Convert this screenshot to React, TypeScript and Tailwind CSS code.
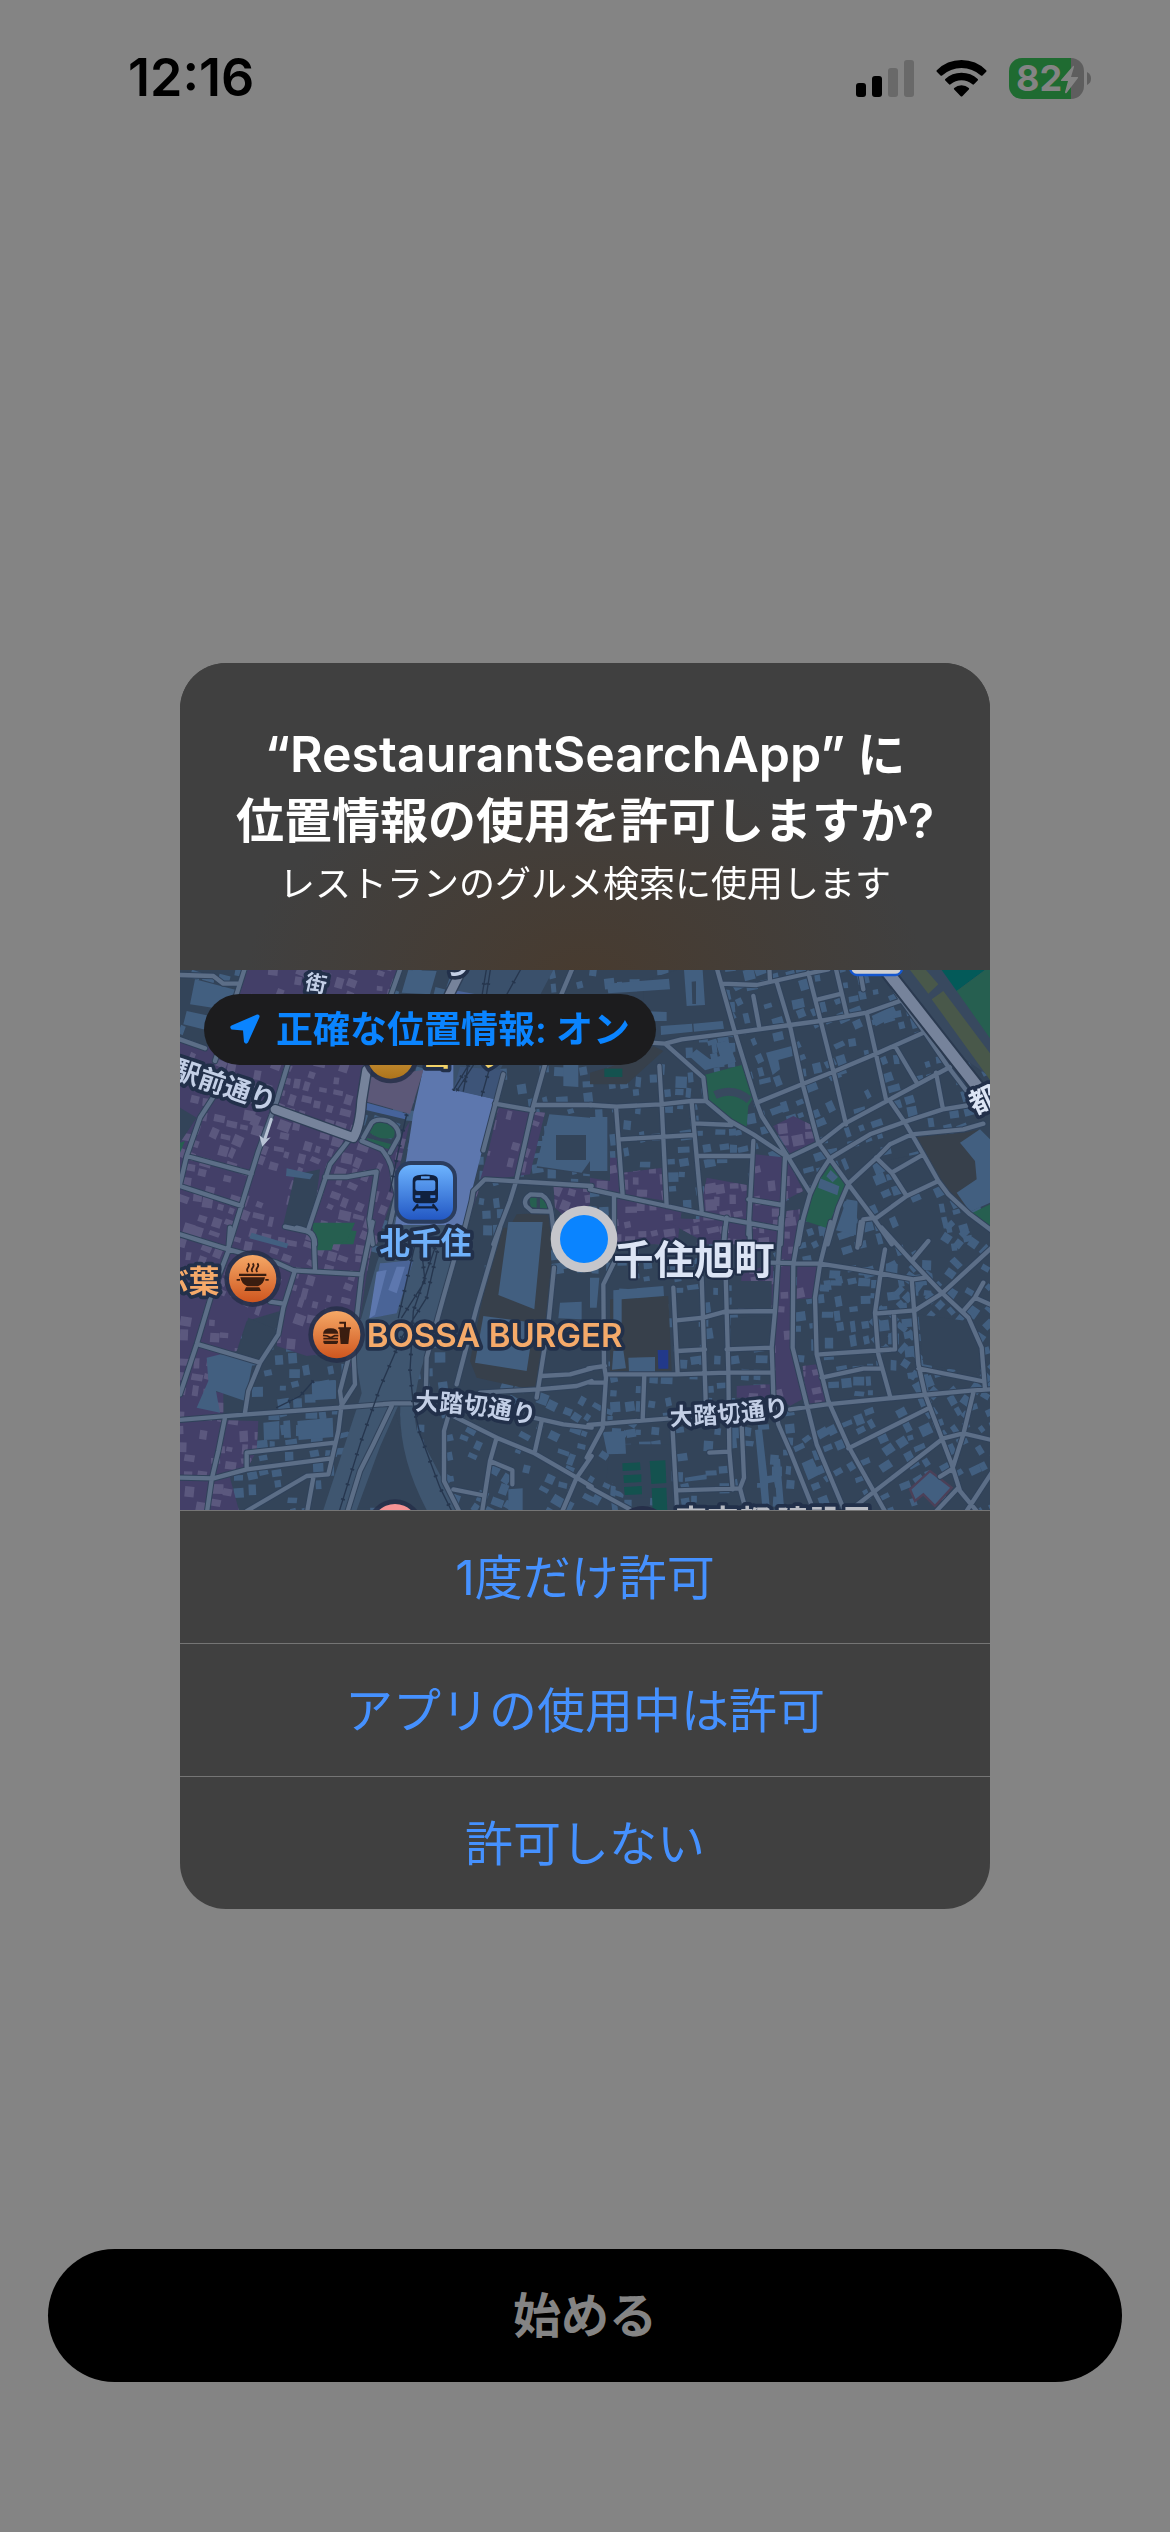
import React from "react";

const BUILDING = "#425f80";
const LAND = "#334459";
const MALL = "#433f68";
const MALL_BUILDING = "#5b587e";
const ROAD = "#5c6e87";

type Zone = { x: number; y: number; w: number; h: number; angle: number };

/* The map is drawn on a 2430 x 1620 canvas, split into four quadrants. */
const QUADRANTS: Record<string, string> = {
  nw: "translate(0 -27)",
  ne: "translate(1230 -27)",
  sw: "translate(0 783)",
  se: "translate(1230 783)",
};

const MALL_AREAS: Record<string, string> = {
  nw: "M0 235L110 262L190 20H655L620 150L560 350L540 520L640 560L690 480L640 700L590 850H0ZM955 440L1095 455L1050 640L905 660L860 800L925 570ZM1120 665L1230 680V730L1180 790L1125 740Z",
  ne: "M100 635L220 620L230 720L100 700ZM350 650L470 672V790L330 745ZM80 712L275 750L262 850H80ZM330 755L570 800V850H320ZM495 580L590 590L640 690L590 715L570 810L475 780ZM550 495L610 465L660 490L678 540L600 580ZM590 750L630 745L620 850H575ZM0 650L60 660V590H85L98 700L0 685Z",
  sw: "M0 -27H590L560 130L530 330L515 420L500 360L380 375L290 345L300 240L200 270L170 360L120 370L80 480L130 485V550L0 565V340ZM0 565L235 570L230 660L200 715L150 740L180 850H0Z",
  se: "M455 130L550 95V232H447ZM570 -27H640L610 100L615 350L645 500L600 525L555 490V240ZM622 100H690L675 200L620 205ZM638 405L680 400L710 515L650 520ZM440 465L540 460L545 502L440 500ZM210 -40L560 -27V30L320 20Z",
};

const QUIET_AREAS: Record<string, string> = {
  nw: "M345 640L420 625L395 815L310 790ZM0 440L50 470L0 545ZM1110 480L1230 470V640L1070 620ZM1010 670L1110 680L1120 840H950Z",
  ne: "M340 -0L385 27L435 215L225 245L160 240V60ZM880 600L980 580L1045 655L950 700Z",
  sw: "M205 260L300 300L240 380L170 370ZM560 600L640 530L740 830H520Z",
  se: "M60 640H245V800H110L50 740ZM425 150H545V232H425ZM422 260L545 255V345H420ZM985 250L1130 270L1170 350V430L1000 400Z",
};

const DARK_AREAS: Record<string, string> = {
  nw: "M1010 760L1110 755L1120 850H960Z",
  ne: "M970 527L1120 515L1170 505L1200 600V720L1145 750L1075 700ZM0 335L150 290L190 255L220 270L110 370H0Z",
  sw: "M950 -10H1110L1115 120L1070 480L890 440L870 390Z",
  se: "M60 205L235 195L245 420H60Z",
};

const GREEN_AREAS: Record<string, string> = {
  nw: "M570 500Q580 475 615 485Q655 500 640 530Q600 540 570 515ZM560 530L635 550L630 565L560 548ZM400 795L530 810L520 850H400ZM0 545L15 540L0 575ZM1048 708L1070 710V740L1052 738ZM1080 710L1095 712L1105 748L1080 742Z",
  ne: "M342 342L455 312L490 410L475 435L470 497L430 480L348 415ZM725 605L770 660L712 802L645 780L672 680ZM1145 757L1200 730V805ZM1185 20H1200V235L1095 90Z",
  sw: "M395 -25H525L500 30L460 40L455 58H410Z",
  se: "",
};

const TEAL_AREAS: Record<string, string> = {
  nw: "",
  ne: "M43 323H97V348H43Z",
  sw: "",
  se: "M97 697L150 694L152 717L98 720ZM100 733L154 730V753L102 756ZM102 768L155 765L156 790L104 792ZM179 690L226 688L229 756L184 759ZM185 772L229 770L232 840H188Z",
};

const BIG_BUILDINGS: Record<string, string> = {
  nw: "M45 55L180 90L160 150L30 130ZM20 150L90 165V210L10 190ZM1108 460L1230 470V600L1205 635L1068 615ZM685 27L770 30L750 100L665 95ZM1150 310L1195 312V378L1150 375ZM985 795L1050 800V850H985ZM320 622L400 640L390 655L318 645Z",
  ne: "M50 68L237 53L240 85L55 97ZM282 27H338L345 132L290 135ZM212 195L306 188L308 212L213 222ZM310 188L398 180L402 203L312 212ZM150 150L230 153V180H150ZM0 468H52V630H0ZM845 165L910 135L923 162L857 196ZM297 285L320 265L360 295L390 285L378 247L415 238L438 302L345 328ZM528 275L605 255L608 285L565 297L570 325L548 342ZM1110 545L1170 505L1200 535V725L1140 752L1100 695L1160 655L1155 600ZM770 715L803 720L798 823L738 808ZM690 652L748 676L742 703L684 680ZM722 627L744 648L728 664L709 646Z",
  sw: "M985 -27H1088L1063 235L955 192ZM910 255L1062 275L1040 420L885 395ZM250 575L298 570V625L252 627ZM352 570L458 560L460 618L356 627ZM122 370L220 385L195 510L108 480L120 545L50 530L85 450L80 380ZM395 452L468 448V503L397 508ZM1140 215L1205 212V265L1135 262ZM985 775L1028 772V840H985ZM215 5L325 38L320 52L208 22ZM310 570L330 568L333 620H312Z",
  se: "M70 178L220 165L222 195L95 205V275L70 280ZM115 380L195 378V423H117ZM38 603L104 600L108 668L52 670ZM495 597L516 594L532 735L553 732L548 680L570 684L583 840H562L556 752L533 757L540 840H518ZM635 697L668 682L690 730L655 748ZM0 140H28L20 230H0ZM70 360L100 358L108 412L66 416ZM285 740L350 730V745L285 752Z",
};

const ROADS: Record<string, string> = {
  nw: "M0 42L100 45L130 68H175M195 20L160 130L105 300M325 305L290 420L235 570L148 850M105 400L60 470L20 585L0 670M20 585L215 638M0 675L185 735M0 235L75 262M505 540L450 610L385 805M435 648H500L590 632L568 775L578 850M315 797L385 812Q405 818 405 850M545 540L605 565Q640 605 640 660L650 700L630 790M550 530L575 485Q590 470 625 480Q662 500 655 530L630 575M662 20L630 110M1178 20L1140 110M970 340L910 568M1095 310L1060 435L1010 655L990 720L940 850M945 428L1060 448M1065 432H1235M850 820L875 720L880 690L915 655L1235 675M1125 850L1115 760Q1110 715 1085 702L1052 700Q1028 715 1038 735L1055 750L1110 752",
  ne: "M380 20L435 215L500 425L515 465L595 590L660 695M395 68L500 72L620 45L715 25M538 20L540 60M490 105L507 195M560 62L600 195L638 370L685 545L775 670L850 770L905 850M655 35L692 180L735 350L768 490M737 20L770 160M685 115L755 98M812 40L820 85M180 245L225 248L340 350L348 420L420 480L490 520L595 590M225 248L275 235L435 215L600 192L690 180L830 155L935 118M500 425L640 368L730 332L855 280L1000 215M830 155L858 280L888 415M915 255L980 365M595 590L690 545L760 490L900 415L1080 318M890 50L935 118L1005 215L1075 318L1130 390M1038 335L1058 440M720 592L840 520L945 482L1058 445L1140 432M900 420L945 485L1000 580L1045 660L1075 700L1140 760L1210 812M775 668L860 590L900 550L965 520L1120 505L1180 488M858 590L905 635L950 705M905 635L1000 580M860 770L950 705L1045 660M720 592L685 645L660 700L640 770L625 850M775 670L745 740L713 850M0 432L80 437L210 430L305 420H348M208 315L215 430L230 735M78 437L98 705M90 535L310 522M305 425L335 750M312 487L425 492M320 585H485M490 540L475 820M585 590L572 850M475 715L575 732M0 685L100 707L230 735L400 772L570 803M72 705V850M410 770L400 850M860 770L820 775L808 850",
  sw: "M0 10L145 55L290 95L340 118L405 122L545 130M150 -10L145 60L95 190L50 340L0 490M350 -10Q400 0 402 30L405 115M578 -27L545 130L520 350L525 460L480 530M345 118L310 230L295 310L240 395L205 480L195 545M55 340L240 395M270 212L310 218M-5 567L200 550L480 530L640 517H720M510 365L480 480L485 520L475 600L445 730L380 735L200 840M135 560L115 660L95 745L80 850M0 740L100 742L200 715L455 682M200 715V665L465 635M400 740L380 850M635 525L580 640L540 720L500 850M830 60L790 200L740 380L738 465M960 -10L890 230L830 460M1122 110L1105 280L1070 500M1085 435L1170 430L1235 412M900 485L1075 475L1190 465L1235 450M820 555L950 620L1060 665L1190 740L1235 767M805 555L792 600V750L842 850M1085 570L1065 660M1060 560L1150 580L1235 590M950 620L930 690L905 850M930 690L997 718V760M820 775L905 792M1235 675L1190 740L1143 850",
  se: "M405 -10L403 30M478 -30L480 35M573 -40L555 240L545 350L550 490L565 580L600 660L668 830M632 -27L610 100L608 350L650 520L680 640L768 850M722 -27L690 100L675 200L680 370L715 510L775 645L890 850M540 95L690 98L800 115L970 145L1005 140M875 -10L965 90L1055 185L1135 260L1175 350L1185 475M1015 30L965 90M812 -27L802 50M885 55L870 140L855 245L865 370L900 495M855 248L975 238L1055 188L1205 50M965 145L985 400L1005 490L1085 700L1110 780L1168 850M912 248L915 355L690 370M985 412L1175 450M695 440L820 413H875M1120 240L1155 200L1180 155M1155 200L1205 222M600 535L710 520L1000 492L1150 478L1205 475M1150 485L1120 610L1085 720M775 652L1015 532M790 830L1060 622L1120 607L1205 627M1030 850L1105 770M1050 737L1085 715M1205 725L1130 840M250 170L263 430M260 268L340 260L405 242L555 240M335 140L347 510M407 130L415 420L418 660L428 775M263 360L345 355M410 355L545 350M50 430H260L410 425H545M72 95L40 160L42 400L48 440L38 590L-10 680M-5 412L45 405M0 455H45M163 430L158 565M-5 582L240 562M248 600L262 850M262 778L450 772L462 740L455 585M358 665L418 662M450 772L468 840M-5 767L120 835",
};

const RAILS: Record<string, string> = {
  nw: "M920 20L905 110M932 20L918 110M1025 20L975 110M885 305L830 390M870 305L820 388M865 312L850 390M935 300L905 405M680 460L655 570L630 690",
  ne: "",
  sw: "M705 40L680 150L655 260M725 60L735 150L665 260M772 60L740 200L665 320L600 470L540 640L475 850M765 50L700 240L690 420L700 520L720 610L780 770L820 850M400 450L360 495L290 530",
  se: "",
};

function makeBuildings(zones: Zone[], seed: number, density: number) {
  let s = seed;
  const rand = () => {
    s = (s * 1664525 + 1013904223) % 4294967296;
    return s / 4294967296;
  };
  return zones.map((z) => {
    let d = "";
    for (let y = 0; y < z.h; y += 42) {
      for (let x = 0; x < z.w; x += 40) {
        const px = Math.round(z.x + x + rand() * 14);
        const py = Math.round(z.y + y + rand() * 14);
        const w = Math.round(14 + rand() * 22);
        const h = Math.round(14 + rand() * 20);
        const k = Math.round(rand() * 8 - 4);
        if (rand() < density) d += `M${px} ${py}l${w} ${k}l${-k} ${h}l${-w} ${-k}z`;
      }
    }
    return { d, angle: z.angle, cx: z.x + z.w / 2, cy: z.y + z.h / 2 };
  });
}

const HOUSES = makeBuildings(
  [
    { x: -60, y: -80, w: 900, h: 1000, angle: 14 },
    { x: 880, y: -100, w: 800, h: 1000, angle: -3 },
    { x: 1640, y: -160, w: 950, h: 1040, angle: -17 },
    { x: -60, y: 1060, w: 850, h: 640, angle: -6 },
    { x: 830, y: 1240, w: 500, h: 460, angle: 24 },
    { x: 1280, y: 860, w: 560, h: 820, angle: -2 },
    { x: 1840, y: 880, w: 420, h: 400, angle: -4 },
    { x: 1900, y: 1250, w: 660, h: 480, angle: -27 },
    { x: 2130, y: 820, w: 420, h: 440, angle: 40 },
  ],
  7,
  0.55,
);

const SHOPS = makeBuildings(
  [
    { x: -100, y: -120, w: 1300, h: 1200, angle: 16 },
    { x: -60, y: 1040, w: 400, h: 620, angle: 4 },
    { x: 1220, y: 340, w: 800, h: 1100, angle: -5 },
  ],
  31,
  0.68,
);

function Layer({ shapes, fill }: { shapes: Record<string, string>; fill: string }) {
  return (
    <g fill={fill}>
      {Object.keys(QUADRANTS).map((q) => (
        <path key={q} d={shapes[q]} transform={QUADRANTS[q]} />
      ))}
    </g>
  );
}

function Lines({ shapes, stroke, width, dash }: { shapes: Record<string, string>; stroke: string; width: number; dash?: string }) {
  return (
    <g fill="none" stroke={stroke} strokeWidth={width} strokeDasharray={dash} strokeLinejoin="round" strokeLinecap={dash ? "butt" : "round"}>
      {Object.keys(QUADRANTS).map((q) => (
        <path key={q} d={shapes[q]} transform={QUADRANTS[q]} />
      ))}
    </g>
  );
}

function Poi({ x, y, fill, children }: { x: number; y: number; fill: string; children?: React.ReactNode }) {
  return (
    <g transform={`translate(${x} ${y})`}>
      <circle r="85" fill="#262f49" opacity=".85" />
      <circle r="71" fill={fill} />
      {children}
    </g>
  );
}

function MapView() {
  const halo = { stroke: "#22304a", strokeWidth: 22, strokeLinejoin: "round" as const, paintOrder: "stroke" };
  return (
    <svg viewBox="0 0 2430 1620" preserveAspectRatio="xMidYMid slice" className="block h-full w-full font-['Inter','Noto_Sans_CJK_JP',sans-serif]" role="img" aria-label="現在地の地図">
      <defs>
        <clipPath id="mall">
          {Object.keys(QUADRANTS).map((q) => (
            <path key={q} d={MALL_AREAS[q]} transform={QUADRANTS[q]} />
          ))}
        </clipPath>
        <linearGradient id="orange" x1="0" y1="0" x2="0" y2="1">
          <stop offset="0" stopColor="#f5a866" />
          <stop offset="1" stopColor="#cf561f" />
        </linearGradient>
        <linearGradient id="amber" x1="0" y1="0" x2="0" y2="1">
          <stop offset="0" stopColor="#e0b050" />
          <stop offset="1" stopColor="#ad731b" />
        </linearGradient>
        <linearGradient id="train" x1="0" y1="0" x2="0" y2="1">
          <stop offset="0" stopColor="#6db4ff" />
          <stop offset="1" stopColor="#2358c4" />
        </linearGradient>
      </defs>

      <rect width="2430" height="1620" fill={LAND} />
      <g fill={BUILDING}>
        {HOUSES.map((b, i) => (
          <path key={i} d={b.d} transform={`rotate(${b.angle} ${b.cx} ${b.cy})`} />
        ))}
      </g>
      <Layer shapes={MALL_AREAS} fill={MALL} />
      <g clipPath="url(#mall)" fill={MALL_BUILDING}>
        {SHOPS.map((b, i) => (
          <path key={i} d={b.d} transform={`rotate(${b.angle} ${b.cx} ${b.cy})`} />
        ))}
      </g>
      <Layer shapes={QUIET_AREAS} fill={LAND} />
      <Layer shapes={DARK_AREAS} fill="#37404b" />
      <Layer shapes={GREEN_AREAS} fill="#265f50" />
      <Layer shapes={TEAL_AREAS} fill="#14524f" />
      <Layer shapes={BIG_BUILDINGS} fill={BUILDING} />
      <path d="M1128 495H1218V570H1128Z" fill={LAND} />
      <path d="M1535 35L1548 34V102H1537Z" fill={LAND} />
      <path d="M1433 1140H1465V1196H1435Z" fill="#22398a" />
      <path d="M2190 1558L2250 1503L2315 1553L2265 1608L2230 1573L2205 1593Z" fill={BUILDING} stroke="#4c4058" strokeWidth="7" />
      <path d="M1605 375Q1660 350 1708 390" fill="none" stroke="#38495f" strokeWidth="24" />

      {/* Railway corridor and the station */}
      <path d="M850 0H1120L960 300L945 400L815 360L735 330Z" fill="#3a506b" />
      <path d="M640 740L860 740L735 1160Q690 1290 710 1380L835 1620H740Q650 1450 662 1290L600 1430L530 1620H430L545 1270L520 1130L590 880Z" fill="#3f5670" />
      <path d="M735 273L820 285V358L945 388L850 765H645L680 560L700 430Z" fill="#5d77ae" />
      <path d="M820 60L900 75L860 285H730Z" fill="#4a6399" />
      <path d="M840 290L970 300L945 388L820 360Z" fill="#3d5478" />
      <path d="M562 323L730 300L690 432L560 395Z" fill="#5c5878" />
      <path d="M560 398L682 432L675 448L558 420Z" fill="#46639b" />
      <path d="M600 880L700 870L650 1030L568 1045Z" fill="#4a6497" />
      <path d="M590 905L620 900L585 1035L568 1045ZM625 960L650 890L675 890L650 970Z" fill="#5d77ae" />

      {/* Riverside by the main road */}
      <path d="M2120 0H2430V320L2330 250Z" fill="#38495f" />
      <path d="M2190 0H2238L2275 43L2245 71ZM2255 88L2290 63L2430 250V330Z" fill="#49584a" />
      <path d="M2285 0H2415L2330 63Z" fill="#035a59" />
      <path d="M2415 0H2430V205L2330 63Z" fill="#265f50" />

      <Lines shapes={ROADS} stroke="#30425a" width={19} />
      <Lines shapes={ROADS} stroke={ROAD} width={13} />
      <Lines shapes={RAILS} stroke="#26364e" width={4} />
      <Lines shapes={RAILS} stroke="#26364e" width={12} dash="5 42" />

      <g fill="none" strokeLinejoin="round" strokeLinecap="round">
        <path d="M285 418L520 503Q540 470 545 393L560 300M835 20L780 130" stroke="#2f3f57" strokeWidth="34" />
        <path d="M285 418L520 503Q540 470 545 393L560 300M835 20L780 130" stroke="#76839b" strokeWidth="26" />
        <path d="M2110 -10L2400 360" stroke="#2b3a50" strokeWidth="46" />
        <path d="M2110 -10L2400 360" stroke="#76839b" strokeWidth="34" />
        <path d="M274 448L252 515" stroke="#b9c4d6" strokeWidth="9" />
      </g>
      <path d="M238 496L254 508L272 502L247 530Z" fill="#b9c4d6" />
      <rect x="2011" y="-40" width="155" height="55" rx="20" fill="#cfcfd1" stroke="#1557cf" strokeWidth="7" />

      {/* Street names */}
      <defs>
        <path id="street-a" d="M-26 322L290 430" />
        <path id="street-b" d="M705 1320Q890 1322 1070 1366" />
        <path id="street-c" d="M1470 1366Q1660 1362 1840 1334" />
      </defs>
      <g fill="#c3cfe6" fontWeight="700" {...halo}>
        <text fontSize="80"><textPath href="#street-a">駅前通り</textPath></text>
        <text fontSize="72"><textPath href="#street-b">大踏切通り</textPath></text>
        <text fontSize="72"><textPath href="#street-c">大踏切通り</textPath></text>
        <text fontSize="64" transform="translate(372 56) rotate(12)">街</text>
        <text fontSize="84" transform="translate(786 2) rotate(18)">り</text>
        <text fontSize="84" fill="#dce5f5" transform="translate(2384 434) rotate(-25)">都</text>
      </g>

      {/* Places */}
      <Poi x={632} y={255} fill="url(#amber)" />
      <text x="725" y="291" fontSize="92" fontWeight="700" fill="#f2d268" {...halo}>ヨーノ</text>
      <Poi x={645} y={1673} fill="#f69395" />
      <circle cx="1388" cy="1690" r="82" fill="#262f49" />
      <text x="1486" y="1690" fontSize="95" fontWeight="700" fill="#b9bcc4" {...halo}>東京都 建設局</text>

      <Poi x={218} y={926} fill="url(#orange)">
        <g fill="#3a1d10">
          <path d="M-41 -15H41V-8H-41ZM-37 -4H37Q34 16 16 23H-16Q-34 16 -37 -4ZM-20 26H20L25 37H-25ZM-48 1H-38V6H-48ZM38 1H48V6H38Z" />
          <path d="M-14 -20q-6 -6 0 -13t0 -13M0 -20q-6 -6 0 -13t0 -13M14 -20q-6 -6 0 -13t0 -13" fill="none" stroke="#3a1d10" strokeWidth="5" />
        </g>
      </Poi>
      <Poi x={470} y={1094} fill="url(#orange)">
        <g fill="#3a1d10">
          <path d="M-41 -3Q-39 -19 -18 -19T5 -3ZM-40 18H4V21Q4 28 -4 28H-32Q-40 28 -40 21Z" />
          <path d="M-41 2L-28 4L-18 9L-6 3H5M-40 12H4" fill="none" stroke="#3a1d10" strokeWidth="5" />
          <path d="M5 -22H43V-17H40L35 28H12L8 -17H5Z" />
          <path d="M25 -18V-36H8" fill="none" stroke="#3a1d10" strokeWidth="6" />
        </g>
      </Poi>
      <g>
        <rect x="643" y="573" width="188" height="188" rx="50" fill="#2b3d5e" />
        <rect x="655" y="585" width="164" height="164" rx="38" fill="url(#train)" />
        <path fillRule="evenodd" fill="#10213f" d="M713 616Q736 611 760 616Q774 619 774 632V684Q774 699 759 700H713Q698 699 698 684V632Q698 619 713 616ZM723 619V626H749V619ZM712 631Q706 631 706 637V656Q706 663 713 663H759Q766 663 766 656V637Q766 631 760 631ZM706 676V684H721V676ZM751 676V684H766V676Z" />
        <path d="M714 703L699 722M758 703L773 722M708 712H764" stroke="#10213f" strokeWidth="7" />
      </g>
      <g fontWeight="700" {...halo}>
        <text x="118" y="966" fontSize="92" textAnchor="end" fill="#f5aa6a">ぶ葉</text>
        <text x="598" y="853" fontSize="92" fill="#70b1fb">北千住</text>
        <text x="560" y="1131" fontSize="99" fontWeight="600" fill="#f5aa6a">BOSSA BURGER</text>
        <text x="1300" y="912" fontSize="121" fill="#dce5f5" strokeWidth="14">千住旭町</text>
      </g>

      {/* Current position */}
      <circle cx="1212" cy="807" r="100" fill="#c6c6cb" />
      <circle cx="1212" cy="807" r="72" fill="#0a84ff" />
    </svg>
  );
}

function StatusBar() {
  return (
    <header className="flex h-[156px] items-center justify-between pr-[79px] pl-[128px]">
      <time className="text-[52px] leading-none font-semibold">12:16</time>
      <div className="flex items-center gap-[22px]">
        <svg className="h-[37px] w-[58px]" viewBox="0 0 58 37" aria-label="電波">
          <rect y="23" width="10" height="14" rx="3" />
          <rect x="16" y="16" width="10" height="21" rx="3" />
          <rect x="32" y="8" width="10" height="29" rx="3" fill="#696969" />
          <rect x="48" width="10" height="37" rx="3" fill="#696969" />
        </svg>
        <svg className="h-[37px] w-[51px]" viewBox="0 0 51 37" aria-label="Wi-Fi">
          <path d="M0.8 10.2Q11 0 25.500 0T50.200 10.200Q51 11 50.200 11.800L46.500 15.500Q45.700 16.200 44.900 15.500Q36.500 8 25.500 8T6.100 15.500Q5.300 16.200 4.500 15.500L0.800 11.800Q0 11 0.800 10.200Z" />
          <path d="M9.300 19Q16 12.800 25.500 12.800T41.700 19Q42.500 19.800 41.700 20.600L38 24.300Q37.200 25 36.400 24.300Q31.500 20.300 25.500 20.300T14.600 24.300Q13.800 25 13 24.300L9.300 20.600Q8.500 19.800 9.300 19Z" />
          <path d="M18.200 28Q21.300 25.300 25.500 25.300T32.800 28Q33.600 28.800 32.800 29.600L26.300 36.200Q25.500 37 24.700 36.200L18.200 29.600Q17.400 28.800 18.200 28Z" />
        </svg>
        <div className="flex items-center gap-[3px]">
          <div className="relative flex h-[41px] w-[75px] items-center overflow-hidden rounded-[13px] bg-[linear-gradient(to_right,#1f6b31_62px,#5e5e5e_62px)] pl-[7px]">
            <span className="text-[36px] leading-none font-bold text-[#848484]">82</span>
            <svg className="absolute top-[7px] right-[5px] h-[29px] w-[19px]" viewBox="0 0 19 29" aria-hidden="true">
              <path d="M13 1L1 15Q0.500 16 1.500 16H8L5 27Q5 29 6.500 28L18 13Q18.500 12 17.500 12H11L14 2Q14 0 13 1Z" fill="#848484" />
            </svg>
          </div>
          <svg className="h-[13px] w-[4px]" viewBox="0 0 4 13" aria-hidden="true">
            <path d="M0 0Q4 2 4 6.500T0 13Z" fill="#5e5e5e" />
          </svg>
        </div>
      </div>
    </header>
  );
}

const CHOICES = ["1度だけ許可", "アプリの使用中は許可", "許可しない"];

function PermissionDialog() {
  return (
    <div className="fixed inset-0 flex items-center justify-center pt-[141px] pb-[102px]">
      <section role="dialog" aria-modal="true" aria-labelledby="dialog-title" className="w-full max-w-[810px] overflow-hidden rounded-[46px] bg-[#404040]">
        <div className="bg-[radial-gradient(ellipse_42%_75%_at_50%_105%,#483b2f,#404040)] px-6 pt-[58px] pb-[56px] text-center text-white">
          <h1 id="dialog-title" className="text-[48px] leading-[66px] font-semibold">
            <span className="text-[50px]">“RestaurantSearchApp”</span> に<br />位置情報の使用を許可しますか?
          </h1>
          <p className="text-[36px] leading-[60px]">レストランのグルメ検索に使用します</p>
        </div>
        <div className="relative aspect-[3/2] overflow-hidden">
          <MapView />
          <button type="button" className="absolute top-[24px] left-[24px] flex h-[71px] items-center gap-[16px] rounded-full bg-[#1c1c1e] pr-[26px] pl-[26px] text-[36px] leading-none font-semibold text-[#0a84ff]">
            <svg className="h-[30px] w-[30px]" viewBox="0 0 30 30" aria-hidden="true">
              <path d="M27 0.500L1.500 11.500Q-1 13 1.500 15.500L13 16.500L14 28Q16 31 18 28.500L29.500 3Q30 0 27 0.500Z" fill="currentColor" />
            </svg>
            <span className="text-[37px]">正確な位置情報: オン</span>
          </button>
        </div>
        {CHOICES.map((label) => (
          <button key={label} type="button" className="block h-[133px] w-full border-t border-[#757575] pt-[2px] text-[48px] text-[#4591ff]">
            {label}
          </button>
        ))}
      </section>
    </div>
  );
}

export default function App() {
  return (
    <div lang="ja" className="flex min-h-screen flex-col justify-between bg-[#848484] font-['Inter','Noto_Sans_CJK_JP',sans-serif] text-black">
      <StatusBar />
      <main className="px-[48px] pb-[150px]">
        <button type="button" className="h-[133px] w-full rounded-full bg-black text-[48px] font-semibold text-[#848484]">
          始める
        </button>
      </main>
      <PermissionDialog />
    </div>
  );
}
